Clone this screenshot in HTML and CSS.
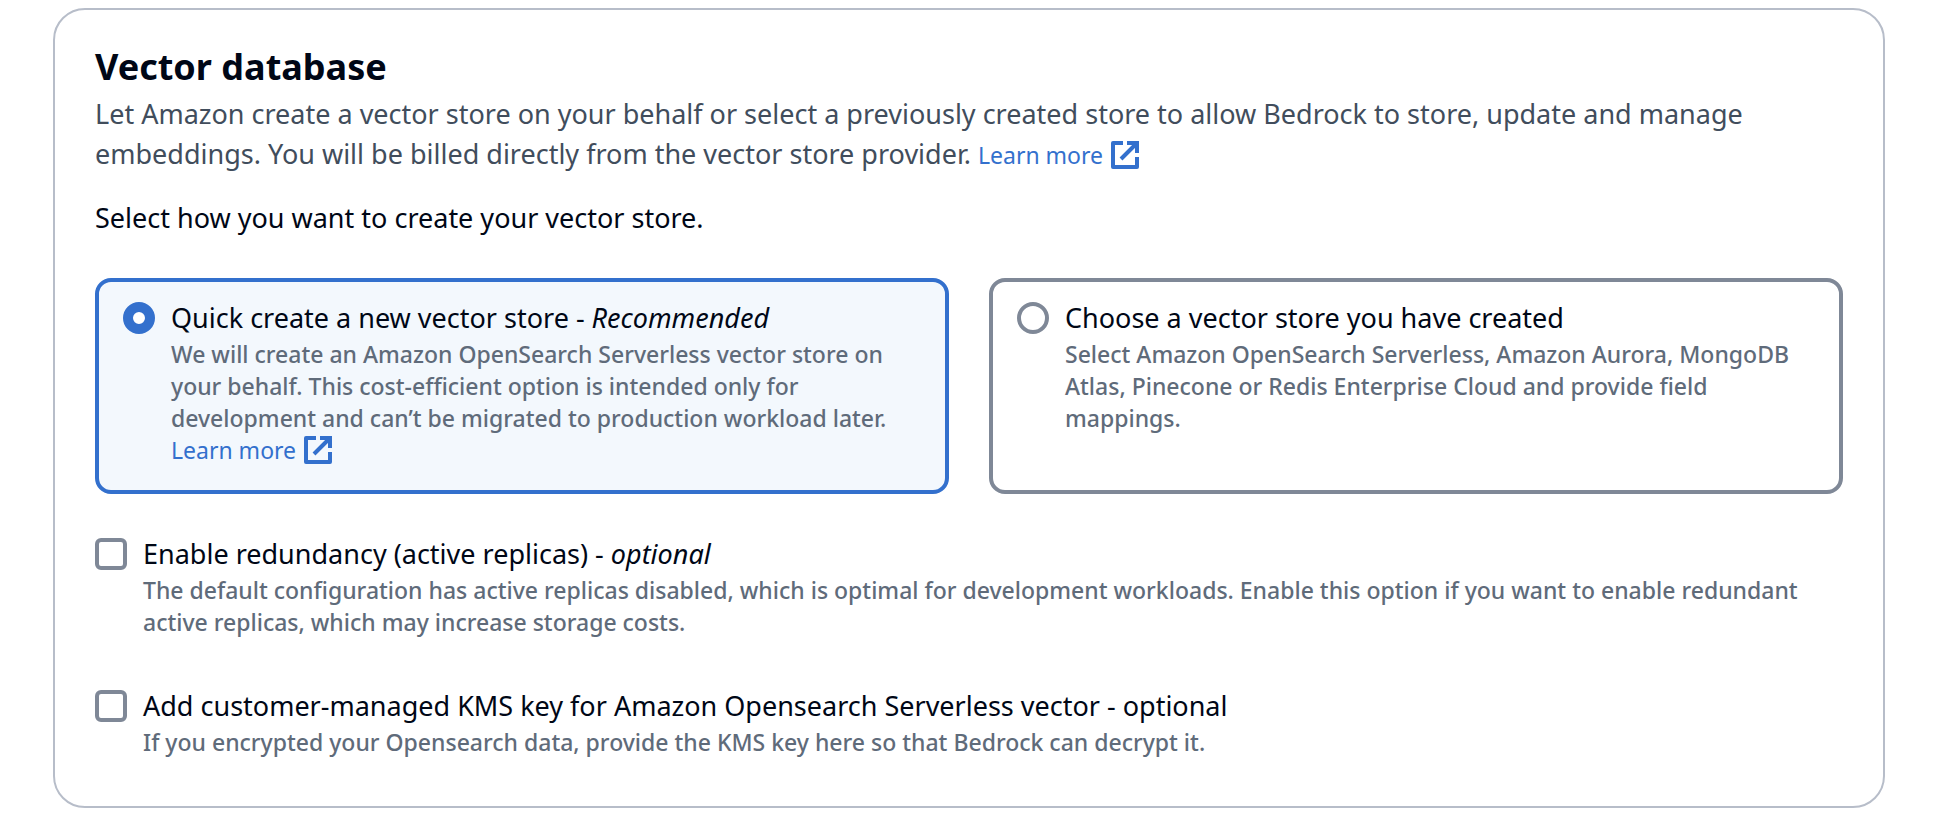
FILE: index.html
```
<!DOCTYPE html>
<html lang="en">
<head>
<meta charset="utf-8">
<meta name="viewport" content="width=device-width, initial-scale=1">
<title>Vector database</title>
<link rel="stylesheet" href="styles.css">
</head>
<body>
<svg class="sprite" aria-hidden="true">
  <symbol id="external" viewBox="0 0 28 28">
    <g fill="none" stroke="currentColor" stroke-width="4">
      <path stroke-linejoin="round" d="M12 2H2V26H26V16"/>
      <path d="M16 2H26V12M26 2L10 18"/>
    </g>
  </symbol>
</svg>
<main class="panel">
  <header class="panel-header">
    <h2 class="panel-title">Vector database</h2>
    <p class="panel-description">Let Amazon create a vector store on your behalf or select a previously created store to allow Bedrock to store, update and manage embeddings. You will be billed directly from the vector store provider. <a class="link" href="#">Learn more<svg class="link-icon" aria-hidden="true"><use href="#external"/></svg></a></p>
  </header>
  <fieldset class="choices">
    <legend class="choices-legend">Select how you want to create your vector store.</legend>
    <div class="tiles">
      <div class="tile option">
        <input class="control radio" type="radio" name="store" id="quick" aria-describedby="quick-text" checked>
        <div class="option-body">
          <label class="option-label" for="quick">Quick create a new vector store - <em>Recommended</em></label>
          <p class="option-text" id="quick-text">We will create an Amazon OpenSearch Serverless vector store on your behalf. This cost-efficient option is intended only for development and can’t be migrated to production workload later. <a class="link" href="#">Learn more<svg class="link-icon" aria-hidden="true"><use href="#external"/></svg></a></p>
        </div>
      </div>
      <div class="tile option">
        <input class="control radio" type="radio" name="store" id="existing" aria-describedby="existing-text">
        <div class="option-body">
          <label class="option-label" for="existing">Choose a vector store you have created</label>
          <p class="option-text" id="existing-text">Select Amazon OpenSearch Serverless, Amazon Aurora, MongoDB Atlas, Pinecone or Redis Enterprise Cloud and provide field mappings.</p>
        </div>
      </div>
    </div>
  </fieldset>
  <div class="settings">
    <div class="option">
      <input class="control checkbox" type="checkbox" id="redundancy" aria-describedby="redundancy-text">
      <div class="option-body">
        <label class="option-label" for="redundancy">Enable redundancy (active replicas) - <em>optional</em></label>
        <p class="option-text" id="redundancy-text">The default configuration has active replicas disabled, which is optimal for development workloads. Enable this option if you want to enable redundant active replicas, which may increase storage costs.</p>
      </div>
    </div>
    <div class="option">
      <input class="control checkbox" type="checkbox" id="kms" aria-describedby="kms-text">
      <div class="option-body">
        <label class="option-label" for="kms">Add customer-managed KMS key for Amazon Opensearch Serverless vector - optional</label>
        <p class="option-text" id="kms-text">If you encrypted your Opensearch data, provide the KMS key here so that Bedrock can decrypt it.</p>
      </div>
    </div>
  </div>
</main>
</body>
</html>
```
FILE: styles.css
```
:root {
  --text: #000716;
  --text-description: #414d5c;
  --text-secondary: #5f6b7a;
  --blue: #3370cd;
  --blue-soft: #f3f8fd;
  --control: #7f8897;
  --divider: #b7bdc9;
}

* { box-sizing: border-box; }

body {
  margin: 0;
  padding: 8px 61px 8px 53px;
  background: #fff;
  color: var(--text);
  font-family: "Noto Sans", "Open Sans", sans-serif;
  font-size: 27px;
  font-weight: 430;
  line-height: 40px;
}

h2, p { margin: 0; }

.sprite {
  position: absolute;
  width: 0;
  height: 0;
}

.panel {
  padding: 35px 40px 48px;
  border: 2px solid var(--divider);
  border-radius: 32px;
}

.panel-header { margin-bottom: 24px; }

.panel-title {
  margin-bottom: 5px;
  font-size: 36px;
  font-weight: 700;
  line-height: 44px;
}

.panel-description { color: var(--text-description); }

.link {
  color: var(--blue);
  font-size: 23px;
  font-weight: 450;
  line-height: 32px;
  text-decoration: none;
  white-space: nowrap;
}

.link:hover { text-decoration: underline; }

.link-icon {
  width: 28px;
  height: 28px;
  margin-left: 8px;
  vertical-align: -5px;
}

.choices {
  min-width: 0;
  margin: 0 0 40px;
  padding: 0;
  border: 0;
}

.choices-legend {
  margin-bottom: 40px;
  padding: 0;
}

.tiles {
  display: grid;
  grid-template-columns: 1fr 1fr;
  gap: 40px;
}

.tile {
  padding: 16px 24px 24px;
  border: 4px solid var(--control);
  border-radius: 16px;
}

.tile:has(:checked) {
  border-color: var(--blue);
  background: var(--blue-soft);
}

.option {
  display: flex;
  align-items: flex-start;
  gap: 16px;
}

.option-body {
  flex: 1;
  min-width: 0;
}

.option-label { display: block; }

.option-text {
  color: var(--text-secondary);
  font-size: 23px;
  font-weight: 500;
  line-height: 32px;
}

.control {
  flex: none;
  appearance: none;
  width: 32px;
  height: 32px;
  margin: 4px 0;
  border: 4px solid var(--control);
  background: #fff;
}

.radio { border-radius: 50%; }

.radio:checked {
  border: 10px solid var(--blue);
}

.checkbox { border-radius: 6px; }

.checkbox:checked {
  border-color: var(--blue);
  background: var(--blue);
}

.settings {
  display: grid;
  gap: 48px;
}
```
